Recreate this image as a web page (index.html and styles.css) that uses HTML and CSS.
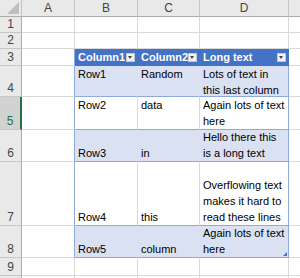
FILE: index.html
```html
<!DOCTYPE html>
<html>
<head>
<meta charset="UTF-8">
<title>Sheet1</title>
<link rel="stylesheet" href="styles.css">
</head>
<body>
	<div id="sheet">
		<!-- 머리행 -->
		<div class="corner">
			<svg width="12" height="12" viewBox="0 0 12 12"><polygon points="12,0 12,12 0,12" fill="#bfbfbf"/></svg>
		</div>
		<div class="colhead">A</div>
		<div class="colhead">B</div>
		<div class="colhead">C</div>
		<div class="colhead">D</div>
		<div class="colhead last"></div>

		<div class="rowhead">1</div>
		<div class="cell"></div><div class="cell"></div><div class="cell"></div><div class="cell"></div><div class="cell"></div>

		<div class="rowhead">2</div>
		<div class="cell"></div><div class="cell"></div><div class="cell"></div><div class="cell"></div><div class="cell"></div>

		<!-- 표 머리글 -->
		<div class="rowhead">3</div>
		<div class="cell edge"></div>
		<div class="cell th"><span>Column1</span><span class="filter"></span></div>
		<div class="cell th"><span>Column2</span><span class="filter"></span></div>
		<div class="cell th"><span>Long text</span><span class="filter"></span></div>
		<div class="cell"></div>

		<div class="rowhead">4</div>
		<div class="cell edge"></div>
		<div class="cell td band top">Row1</div>
		<div class="cell td band top">Random</div>
		<div class="cell td band top lastcol">Lots of text in this last column</div>
		<div class="cell"></div>

		<div class="rowhead sel">5</div>
		<div class="cell edge"></div>
		<div class="cell td top">Row2</div>
		<div class="cell td top">data</div>
		<div class="cell td top lastcol">Again lots of text here</div>
		<div class="cell"></div>

		<div class="rowhead">6</div>
		<div class="cell edge"></div>
		<div class="cell td band">Row3</div>
		<div class="cell td band">in</div>
		<div class="cell td band lastcol">Hello there this is a long text</div>
		<div class="cell"></div>

		<div class="rowhead">7</div>
		<div class="cell edge"></div>
		<div class="cell td">Row4</div>
		<div class="cell td">this</div>
		<div class="cell td lastcol">Overflowing text makes it hard to read these lines</div>
		<div class="cell"></div>

		<div class="rowhead">8</div>
		<div class="cell edge"></div>
		<div class="cell td band">Row5</div>
		<div class="cell td band">column</div>
		<div class="cell td band lastcol resize">Again lots of text here</div>
		<div class="cell"></div>

		<div class="rowhead">9</div>
		<div class="cell"></div><div class="cell"></div><div class="cell"></div><div class="cell"></div><div class="cell"></div>

		<!-- 10행은 창 아래로 잘려서 윗부분만 보인다 -->
		<div class="rowhead"></div>
		<div class="cell"></div><div class="cell"></div><div class="cell"></div><div class="cell"></div><div class="cell"></div>
	</div>
</body>
</html>
```

FILE: styles.css
```css
body {
	margin: 0;
	padding: 0;
	background-color: #fff;
	overflow: hidden;
	font-family: "Liberation Sans", Arial, sans-serif;
	font-size: 11px;
}

#sheet {
	display: grid;
	grid-template-columns: 22px 53px 63px 62px 89px 30px;
	grid-template-rows: 17px 16px 16px 17px 31px 33px 32px 64px 32px 18px 16px;
	width: 300px;
	height: 278px;
	overflow: hidden;
}

#sheet > div {
	box-sizing: border-box;
	border-right: 1px solid #d9d9d9;
	border-bottom: 1px solid #d9d9d9;
}

.corner {
	background-color: #e9e9e9;
	display: flex;
	justify-content: flex-end;
	align-items: flex-end;
	padding: 0 2px 2px 0;
	border-right-color: #c6c6c6 !important;
	border-bottom-color: #ababab !important;
}

.colhead {
	background-color: #e9e9e9;
	color: #444;
	text-align: center;
	line-height: 16px;
	font-size: 12px;
	border-right-color: #c6c6c6 !important;
	border-bottom-color: #ababab !important;
}

.rowhead {
	background-color: #e9e9e9;
	color: #444;
	font-size: 12px;
	line-height: 15px;
	text-align: center;
	display: flex;
	align-items: flex-end;
	justify-content: center;
	border-right-color: #ababab !important;
	border-bottom-color: #c6c6c6 !important;
}

.rowhead.sel {
	background-color: #d2d2d2;
	color: #217346;
	border-right: 2px solid #217346 !important;
}

.cell {
	line-height: 16px;
	padding: 0 2px 0 3px;
	display: flex;
	align-items: flex-end;
	color: #000;
}

/* 표 왼쪽 테두리 */
.cell.edge {
	border-right-color: #8ea9db !important;
}

.cell.th {
	background-color: #4472c4;
	color: #fff;
	font-weight: bold;
	align-items: center;
	justify-content: space-between;
	padding-right: 2px;
	border-right-color: #4472c4 !important;
	border-bottom-color: #4472c4 !important;
}

.cell.th span:first-child {
	white-space: nowrap;
	overflow: hidden;
}

.filter {
	flex: none;
	width: 9px;
	height: 9px;
	background-color: #f2f2f2;
	border: 1px solid #c8c8c8;
	box-sizing: border-box;
	position: relative;
}

.filter::after {
	content: "";
	position: absolute;
	left: 1px;
	top: 2px;
	border-left: 2.5px solid transparent;
	border-right: 2.5px solid transparent;
	border-top: 3px solid #444;
}

.cell.td {
	border-bottom-color: #8ea9db !important;
}

.cell.band {
	background-color: #d9e1f2;
	border-right-color: #d9e1f2 !important;
}

.cell.lastcol {
	border-right-color: #8ea9db !important;
}

.cell.top {
	align-items: flex-start;
}

.resize {
	position: relative;
}

.resize::after {
	content: "";
	position: absolute;
	right: 1px;
	bottom: 1px;
	border-left: 4px solid transparent;
	border-bottom: 4px solid #4472c4;
}
```
